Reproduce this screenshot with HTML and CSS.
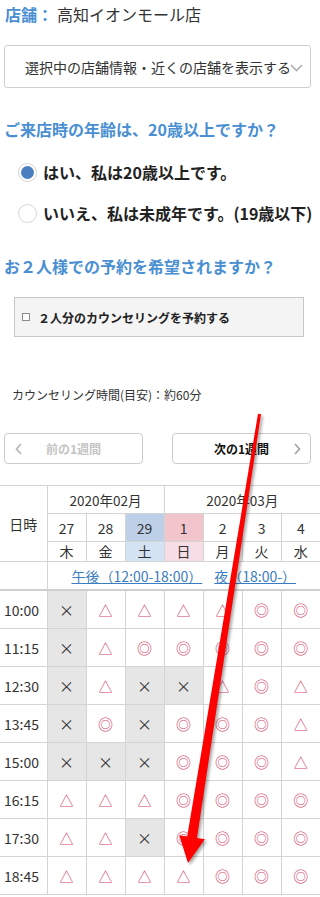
FILE: index.html
```html
<!DOCTYPE html>
<html>
<head>
    <meta name="viewport" content="width=device-width, initial-scale=1.0">
    <link rel="stylesheet" href="styles.css">
</head>
<body>
    <div class="page">
        <div class="store"><span class="store-label">店舗：</span>高知イオンモール店</div>
        <div class="store-select">
            <span class="store-select-text">選択中の店舗情報・近くの店舗を表示する</span>
            <svg class="select-chevron" width="13" height="8" viewBox="0 0 13 8"><path d="M1 1 L6.5 6.5 L12 1" fill="none" stroke="#b0b0b0" stroke-width="1.6"/></svg>
        </div>

        <div class="question">ご来店時の年齢は、20歳以上ですか？</div>
        <div class="radio-list">
            <div class="radio"><span class="radio-mark checked"></span>はい、私は20歳以上です。</div>
            <div class="radio"><span class="radio-mark"></span>いいえ、私は未成年です。(19歳以下)</div>
        </div>

        <div class="question">お２人様での予約を希望されますか？</div>
        <div class="pair-box"><span class="check-mark"></span>２人分のカウンセリングを予約する</div>

        <div class="duration">カウンセリング時間(目安)：約60分</div>

        <div class="week-nav">
            <div class="week-button disabled">
                <svg class="nav-chevron left" width="7" height="12" viewBox="0 0 7 12"><path d="M6 1 L1.5 6 L6 11" fill="none" stroke="#b5b5b5" stroke-width="1.6"/></svg>
                前の1週間
            </div>
            <div class="week-button">
                次の1週間
                <svg class="nav-chevron right" width="7" height="12" viewBox="0 0 7 12"><path d="M1 1 L5.5 6 L1 11" fill="none" stroke="#a0a0a0" stroke-width="1.6"/></svg>
            </div>
        </div>

        <table class="calendar">
            <colgroup>
                <col class="col-time">
                <col><col><col><col><col><col><col>
            </colgroup>
            <tr class="row-month">
                <th rowspan="3" class="head-time">日時</th>
                <th colspan="3">2020年02月</th>
                <th colspan="4">2020年03月</th>
            </tr>
            <tr class="row-day">
                <th>27</th><th>28</th><th class="sat">29</th><th class="sun">1</th><th>2</th><th>3</th><th>4</th>
            </tr>
            <tr class="row-week">
                <th>木</th><th>金</th><th class="sat">土</th><th class="sun">日</th><th>月</th><th>火</th><th>水</th>
            </tr>
            <tr class="row-links">
                <th></th>
                <th colspan="7"><a class="slot-link">午後（12:00-18:00）</a><a class="slot-link">夜（18:00-）</a></th>
            </tr>
            <tr>
                <td class="time">10:00</td>
                <td class="full">×</td><td class="few">△</td><td class="few">△</td><td class="few">△</td><td class="few">△</td><td class="open">◎</td><td class="open">◎</td>
            </tr>
            <tr>
                <td class="time">11:15</td>
                <td class="full">×</td><td class="few">△</td><td class="open">◎</td><td class="open">◎</td><td class="open">◎</td><td class="open">◎</td><td class="open">◎</td>
            </tr>
            <tr>
                <td class="time">12:30</td>
                <td class="full">×</td><td class="few">△</td><td class="full">×</td><td class="full">×</td><td class="few">△</td><td class="open">◎</td><td class="few">△</td>
            </tr>
            <tr>
                <td class="time">13:45</td>
                <td class="full">×</td><td class="open">◎</td><td class="full">×</td><td class="open">◎</td><td class="open">◎</td><td class="open">◎</td><td class="few">△</td>
            </tr>
            <tr>
                <td class="time">15:00</td>
                <td class="full">×</td><td class="full">×</td><td class="full">×</td><td class="open">◎</td><td class="open">◎</td><td class="open">◎</td><td class="few">△</td>
            </tr>
            <tr>
                <td class="time">16:15</td>
                <td class="few">△</td><td class="few">△</td><td class="few">△</td><td class="open">◎</td><td class="open">◎</td><td class="open">◎</td><td class="open">◎</td>
            </tr>
            <tr>
                <td class="time">17:30</td>
                <td class="few">△</td><td class="few">△</td><td class="full">×</td><td class="open">◎</td><td class="open">◎</td><td class="open">◎</td><td class="open">◎</td>
            </tr>
            <tr>
                <td class="time">18:45</td>
                <td class="few">△</td><td class="few">△</td><td class="few">△</td><td class="few">△</td><td class="open">◎</td><td class="open">◎</td><td class="open">◎</td>
            </tr>
        </table>
    </div>

    <svg class="arrow" width="320" height="897" viewBox="0 0 320 897">
        <polygon points="258,413.8 261,414.2 197,838.1 204.9,839.3 188,863 179.3,835.3 187.2,836.5" fill="#ff0000"/>
    </svg>
</body>
</html>
```

FILE: styles.css
```css
body {
    margin: 0;
    padding: 0;
    background-color: #fff;
    color: #222;
    font-family: "Noto Sans CJK JP", "Noto Sans", sans-serif;
    position: relative;
    overflow-x: hidden;
}

.page {
    width: 320px;
    overflow: hidden;
}

.store {
    padding: 3px 5px 0;
    font-size: 16px;
    line-height: 22px;
    color: #333;
}

.store-label {
    color: #4a8fd2;
    font-weight: bold;
    margin-right: 4px;
}

.store-select {
    box-sizing: border-box;
    margin: 20px 0 0 4px;
    width: 307px;
    height: 43px;
    border: 1px solid #cfcfcf;
    border-radius: 3px;
    display: flex;
    align-items: center;
    padding-left: 20px;
    font-size: 14px;
    color: #333;
    white-space: nowrap;
}

.select-chevron {
    margin-left: -1px;
    margin-top: 2px;
}

.question {
    margin-top: 29px;
    padding-left: 4px;
    font-size: 16px;
    line-height: 24px;
    font-weight: bold;
    color: #4a8fd2;
    white-space: nowrap;
}

.radio-list {
    margin-top: 19px;
    padding-left: 18px;
    display: flex;
    flex-direction: column;
    gap: 17px;
}

.radio {
    display: flex;
    align-items: center;
    gap: 6px;
    height: 24px;
    font-size: 16px;
    font-weight: bold;
    color: #222;
    white-space: nowrap;
}

.radio-mark {
    box-sizing: border-box;
    width: 19px;
    height: 19px;
    border: 1px solid #d6d6d6;
    border-radius: 50%;
    background: #fff;
    display: flex;
    align-items: center;
    justify-content: center;
    flex-shrink: 0;
}

.radio-mark.checked::after {
    content: "";
    width: 13px;
    height: 13px;
    border-radius: 50%;
    background: #4a80c0;
}

.pair-box {
    box-sizing: border-box;
    margin: 19px 0 0 14px;
    width: 290px;
    height: 40px;
    border: 1px solid #c8c8c8;
    background: #f4f4f4;
    display: flex;
    align-items: center;
    padding-left: 7px;
    gap: 8px;
    font-size: 12px;
    font-weight: bold;
    color: #222;
}

.check-mark {
    box-sizing: border-box;
    width: 8px;
    height: 8px;
    border: 1px solid #8a8a8a;
    background: #fff;
}

.duration {
    margin-top: 49px;
    padding-left: 12px;
    font-size: 12px;
    line-height: 18px;
    color: #333;
}

.week-nav {
    margin-top: 29px;
    padding: 0 9px 0 4px;
    display: flex;
    gap: 29px;
}

.week-button {
    box-sizing: border-box;
    position: relative;
    width: 139px;
    height: 31px;
    border: 1px solid #cccccc;
    border-radius: 4px;
    display: flex;
    align-items: center;
    justify-content: center;
    font-size: 12px;
    font-weight: bold;
    color: #111;
}

.week-button.disabled {
    color: #c4c4c4;
}

.nav-chevron {
    position: absolute;
    top: 9px;
}

.nav-chevron.left {
    left: 10px;
}

.nav-chevron.right {
    right: 9px;
}

.calendar {
    margin-top: 21px;
    width: 320px;
    border-collapse: collapse;
    table-layout: fixed;
    font-size: 14px;
    color: #333;
}

.calendar col {
    width: 39px;
}

.calendar col.col-time {
    width: 47px;
}

.calendar th,
.calendar td {
    border: 1px solid #d4d4d4;
    padding: 0;
    text-align: center;
    font-weight: normal;
}

.calendar tr > :first-child {
    border-left: none;
}

.calendar tr > :last-child {
    border-right: none;
}

.calendar .head-time {
    border-left: none;
    font-size: 14px;
}

.row-month th {
    height: 27px;
    font-size: 13.5px;
}

.row-day th {
    height: 27px;
}

.row-week th {
    height: 19px;
    line-height: 19px;
}

.row-links th {
    height: 27px;
    border-bottom: 2px solid #cfcfcf;
    white-space: nowrap;
}

.slot-link {
    color: #3a7dc0;
    text-decoration: underline;
    font-size: 14px;
    margin: 0 6px;
}

.sat {
    background: #d3e3f4;
}

.row-day .sat {
    background: #bdd0e8;
}

.sun {
    background: #f7dde5;
}

.row-day .sun {
    background: #f2c5cd;
}

.calendar td {
    height: 37px;
}

.calendar td.time {
    text-align: left;
    padding-left: 4px;
    font-size: 14px;
    color: #333;
}

.full {
    background: #e6e6e6;
    color: #333;
    font-size: 15px;
}

.few {
    color: #d5476b;
    font-size: 14px;
}

.open {
    color: #d5476b;
    font-size: 15px;
    font-weight: bold;
}

.arrow {
    position: absolute;
    top: 0;
    left: 0;
    pointer-events: none;
    filter: drop-shadow(2px 2px 1.5px rgba(0, 0, 0, 0.35));
}
```
